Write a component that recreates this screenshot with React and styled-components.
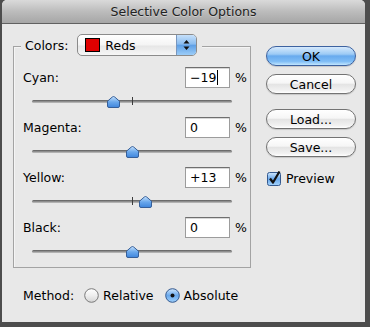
import React from 'react';
import styled, { createGlobalStyle } from 'styled-components';

const Global = createGlobalStyle`
  html, body { margin: 0; padding: 0; background: #4d4d4d; }
  body {
    width: 370px; height: 327px; overflow: hidden;
    font-family: "DejaVu Sans", "Liberation Sans", sans-serif;
    font-size: 12.5px; color: #000;
  }
`;

const Window = styled.div`
  margin-left: 2px;
  width: 363px;
  height: 322px;
  background: #e8e8e8;
  border-radius: 5px 5px 0 0;
  overflow: hidden;
  display: flex;
  flex-direction: column;
`;

const TitleBar = styled.div`
  height: 23px;
  flex: none;
  border-bottom: 1px solid #616161;
  background: linear-gradient(#dadada, #bcbcbc 50%, #a6a6a6);
  display: flex;
  align-items: center;
  justify-content: center;
  color: #222;
  text-shadow: 0 1px 0 rgba(255, 255, 255, 0.35);
`;

const Body = styled.div`
  display: flex;
  padding: 22px 0 0 11px;
`;

const LeftColumn = styled.div`
  width: 238px;
  display: flex;
  flex-direction: column;
`;

const GroupBox = styled.div`
  border: 1px solid #a3a3a3;
  box-shadow: inset 1px 1px 0 #f4f4f4;
  display: flex;
  flex-direction: column;
`;

const Header = styled.div`
  align-self: flex-start;
  margin: -13px 0 0 7px;
  padding: 0 5px 0 4px;
  height: 22px;
  background: #e8e8e8;
  display: flex;
  align-items: center;
  gap: 9px;
`;

const Popup = styled.div`
  width: 120px;
  height: 22px;
  box-sizing: border-box;
  border: 1px solid #8b8b8b;
  border-radius: 5px;
  background: linear-gradient(#ffffff, #f4f4f4 50%, #e6e6e6 55%, #f6f6f6);
  display: flex;
  align-items: center;
  overflow: hidden;
`;

const Swatch = styled.div`
  width: 15px;
  height: 14px;
  box-sizing: border-box;
  margin-left: 7px;
  border: 1px solid #000;
  background: ${p => p.$color};
`;

const PopupText = styled.span`
  margin-left: 5px;
  flex: 1;
`;

const PopupArrows = styled.div`
  width: 19px;
  align-self: stretch;
  border-left: 1px solid #7896be;
  background: linear-gradient(#c6e0fa, #8bbdf0 45%, #5fa0e6 52%, #9ccdf8);
  display: flex;
  align-items: center;
  justify-content: center;
`;

const Row = styled.div`
  height: 21px;
  margin-top: ${p => p.$first ? '11px' : '0'};
  display: flex;
  align-items: center;
  padding-left: 9px;
`;

const Label = styled.span`
  flex: 1;
`;

const Field = styled.div`
  width: 45px;
  height: 21px;
  box-sizing: border-box;
  border: 1px solid #9c9c9c;
  border-top-color: #6f6f6f;
  background: #fff;
  box-shadow: inset 0 1px 0 #d8d8d8;
  display: flex;
  align-items: center;
  padding-left: 4px;
`;

const Caret = styled.span`
  width: 1px;
  height: 15px;
  margin-left: 1px;
  background: #000;
`;

const Percent = styled.span`
  width: 20px;
  box-sizing: border-box;
  padding-left: 5px;
`;

const SliderArea = styled.div`
  position: relative;
  height: 29px;
  width: 200px;
  margin-left: 18px;
`;

const Track = styled.div`
  position: absolute;
  left: 0;
  right: 0;
  top: 12px;
  height: 3px;
  border-radius: 2px;
  background: linear-gradient(#5a5a5a, #8e8e8e 50%, #c4c4c4);
`;

const Tick = styled.div`
  position: absolute;
  left: 100px;
  top: 9px;
  width: 1px;
  height: 8px;
  background: #3c3c3c;
`;

const Thumb = styled.svg`
  position: absolute;
  top: 8px;
  width: 15px;
  height: 12px;
`;

const MethodRow = styled.div`
  margin-top: 19px;
  height: 16px;
  padding-left: 10px;
  display: flex;
  align-items: center;
`;

const Option = styled.span`
  display: flex;
  align-items: center;
  gap: 4px;
  margin-left: ${p => p.$gap}px;
`;

const RightColumn = styled.div`
  width: 90px;
  margin-left: 15px;
  display: flex;
  flex-direction: column;
`;

const Button = styled.div`
  height: 20px;
  box-sizing: border-box;
  margin-top: ${p => p.$gap}px;
  border-radius: 10px;
  border: 1px solid ${p => p.$default ? '#3d62a0' : '#737373'};
  background: ${p => p.$default
    ? 'linear-gradient(#d6e9fc, #9ccaf5 40%, #68aaee 50%, #7fbdf6 80%, #c2e6ff)'
    : 'linear-gradient(#ffffff, #f6f6f6 45%, #e4e4e4 52%, #f1f1f1 85%, #ffffff)'};
  box-shadow: 0 1px 1px rgba(0, 0, 0, 0.15);
  display: flex;
  align-items: center;
  justify-content: center;
`;

const CheckRow = styled.div`
  margin-top: 13px;
  padding-left: 1px;
  height: 16px;
  display: flex;
  align-items: center;
  gap: 4px;
`;

function SliderThumb({ value }) {
  return (
    <Thumb style={{ left: 100 + value - 7 }} viewBox="0 0 15 12">
      <defs>
        <linearGradient id="tg" x1="0" y1="0" x2="0" y2="1">
          <stop offset="0" stopColor="#c4e0fb" />
          <stop offset="0.5" stopColor="#6aa8ec" />
          <stop offset="1" stopColor="#3f85dc" />
        </linearGradient>
      </defs>
      <path d="M1.5 5.2 L6.3 1 Q7.5 0 8.7 1 L13.5 5.2 V10 Q13.5 11.5 12 11.5 H3 Q1.5 11.5 1.5 10 Z"
        fill="url(#tg)" stroke="#365f99" strokeWidth="1" />
    </Thumb>
  );
}

function Adjust({ label, value, text, caret, first }) {
  return (
    <>
      <Row $first={first}>
        <Label>{label}</Label>
        <Field>{text}{caret && <Caret />}</Field>
        <Percent>%</Percent>
      </Row>
      <SliderArea>
        <Track />
        <Tick />
        <SliderThumb value={value} />
      </SliderArea>
    </>
  );
}

function Radio({ on }) {
  return (
    <svg width="15" height="15" viewBox="0 0 15 15">
      <defs>
        <linearGradient id="rw" x1="0" y1="0" x2="0" y2="1">
          <stop offset="0" stopColor="#ffffff" />
          <stop offset="0.5" stopColor="#eeeeee" />
          <stop offset="1" stopColor="#d4d4d4" />
        </linearGradient>
        <linearGradient id="rb" x1="0" y1="0" x2="0" y2="1">
          <stop offset="0" stopColor="#cfe6fc" />
          <stop offset="0.5" stopColor="#6aa9ec" />
          <stop offset="1" stopColor="#9fd0fb" />
        </linearGradient>
      </defs>
      <circle cx="7.5" cy="7.5" r="6.8" fill={on ? 'url(#rb)' : 'url(#rw)'}
        stroke={on ? '#34598f' : '#7a7a7a'} strokeWidth="1" />
      {on && <circle cx="7.5" cy="7.5" r="2" fill="#111" />}
    </svg>
  );
}

function CheckBox() {
  return (
    <svg width="15" height="15" viewBox="0 0 15 15">
      <defs>
        <linearGradient id="cb" x1="0" y1="0" x2="0" y2="1">
          <stop offset="0" stopColor="#cfe6fc" />
          <stop offset="0.5" stopColor="#6aa9ec" />
          <stop offset="1" stopColor="#a4d3fb" />
        </linearGradient>
      </defs>
      <rect x="0.5" y="1.5" width="13" height="13" rx="2" fill="url(#cb)" stroke="#34598f" />
      <path d="M3 7.5 L6 11.5 L12.5 0.5" fill="none" stroke="#111" strokeWidth="2.2"
        strokeLinejoin="round" />
    </svg>
  );
}

export default function App() {
  return (
    <>
      <Global />
      <Window>
        <TitleBar>Selective Color Options</TitleBar>
        <Body>
          <LeftColumn>
            <GroupBox>
              <Header>
                <span>Colors:</span>
                <Popup>
                  <Swatch $color="#e00000" />
                  <PopupText>Reds</PopupText>
                  <PopupArrows>
                    <svg width="7" height="12" viewBox="0 0 7 12">
                      <path d="M3.5 1 L6.5 4.5 H0.5 Z M3.5 11 L6.5 7.5 H0.5 Z" fill="#111" />
                    </svg>
                  </PopupArrows>
                </Popup>
              </Header>
              <Adjust first label="Cyan:" value={-19} text="−19" caret />
              <Adjust label="Magenta:" value={0} text="0" />
              <Adjust label="Yellow:" value={13} text="+13" />
              <Adjust label="Black:" value={0} text="0" />
            </GroupBox>
            <MethodRow>
              <span>Method:</span>
              <Option $gap={10}><Radio />Relative</Option>
              <Option $gap={11}><Radio on />Absolute</Option>
            </MethodRow>
          </LeftColumn>
          <RightColumn>
            <Button $default $gap={0}>OK</Button>
            <Button $gap={8}>Cancel</Button>
            <Button $gap={15}>Load...</Button>
            <Button $gap={8}>Save...</Button>
            <CheckRow><CheckBox />Preview</CheckRow>
          </RightColumn>
        </Body>
      </Window>
    </>
  );
}
